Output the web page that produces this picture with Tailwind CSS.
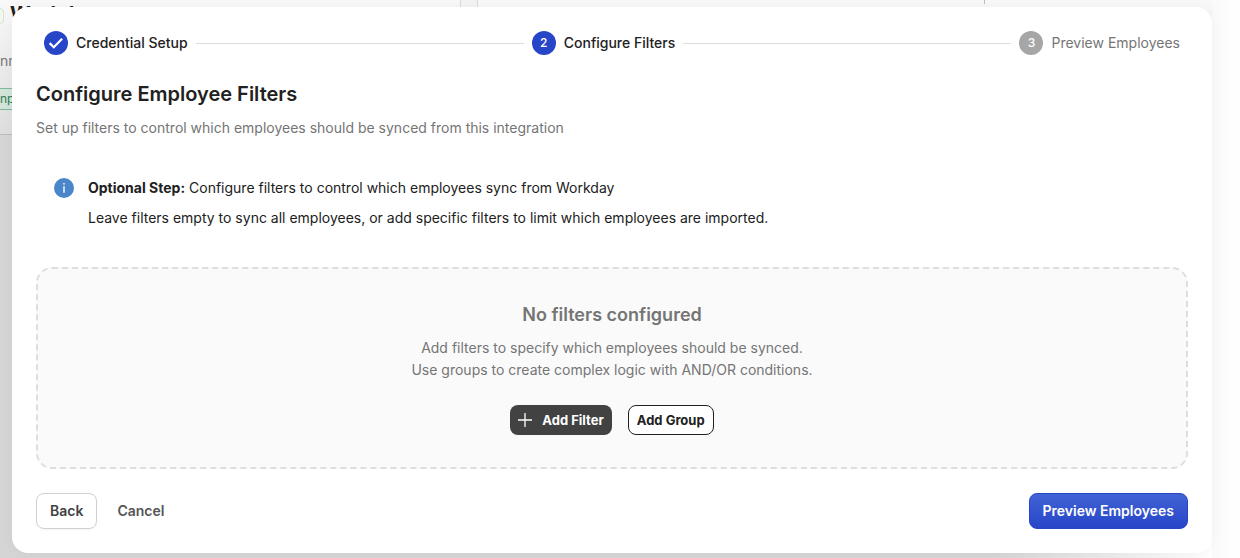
<!DOCTYPE html>
<html lang="en">
<head>
    <meta charset="UTF-8">
    <meta name="viewport" content="width=device-width, initial-scale=1.0">
    <title>Configure Employee Filters</title>
    <script src="https://cdn.jsdelivr.net/npm/@tailwindcss/browser@4"></script>
    <style>
        body {
            font-family: 'Inter', sans-serif;
        }
    </style>
</head>
<body class="relative min-h-screen overflow-hidden bg-linear-to-r from-[#d5d5d5] from-80% to-white to-98% text-sm text-[#212121]">
    <!-- Integrations page behind the dialog -->
    <div class="absolute inset-x-0 top-0 h-[135px] border-b border-[#bdbdbd] bg-linear-to-b from-[#f9f9f9] to-[#dedede]" aria-hidden="true">
        <div class="absolute top-2 -left-3 size-4 rounded border border-[#d3e4cf] bg-[#f3f7f1]"></div>
        <div class="absolute top-0.5 left-2.5 text-xl leading-6 font-bold">Workday</div>
        <div class="absolute top-0 left-[460px] h-2 w-[18px] border-x border-[#dcdcdc] bg-[#f4f4f4]"></div>
        <div class="absolute top-0 left-[984px] h-1 border-l border-[#bdbdbd]"></div>
        <div class="absolute top-[51px] left-0 text-[#757575]">nn</div>
        <div class="absolute top-[88px] left-0 h-[22px] border-y border-[#7fb89a] bg-[#d3e4da] text-xs leading-5 text-[#2e7d52]">np</div>
    </div>
    <div class="absolute inset-y-0 right-0 w-7 bg-linear-to-r from-[#fafafa] to-white"></div>

    <main class="relative mt-[7px] mr-7 ml-3 rounded-2xl bg-white px-6 pt-6 pb-6 shadow-[0_0_16px_rgba(0,0,0,0.04)]">
        <ol class="flex items-center gap-2 px-2">
            <li class="flex items-center gap-2 font-medium">
                <svg class="size-6" viewBox="0 0 24 24" aria-hidden="true">
                    <circle cx="12" cy="12" r="12" fill="#2745c7"/>
                    <path d="M5.6 12.1l4.2 4.1 8.3-8.4" fill="none" stroke="#fff" stroke-width="2.2"/>
                </svg>
                Credential Setup
            </li>
            <li class="h-px flex-1 bg-[#dcdcdc]" aria-hidden="true"></li>
            <li class="flex items-center gap-2 font-medium" aria-current="step">
                <span class="flex size-6 items-center justify-center rounded-full bg-[#2745c7] text-xs text-white">2</span>
                Configure Filters
            </li>
            <li class="h-px flex-1 bg-[#dcdcdc]" aria-hidden="true"></li>
            <li class="flex items-center gap-2 text-[#757575]">
                <span class="flex size-6 items-center justify-center rounded-full bg-[#a6a6a6] text-xs font-medium text-white">3</span>
                Preview Employees
            </li>
        </ol>

        <h1 class="mt-6 text-xl leading-[30px] font-semibold">Configure Employee Filters</h1>
        <p class="mt-[7px] leading-6 text-[#757575]">Set up filters to control which employees should be synced from this integration</p>

        <div class="mt-9 flex gap-3.5 px-[18px]">
            <svg class="mt-0.5 size-5 shrink-0" viewBox="0 0 20 20" aria-hidden="true">
                <circle cx="10" cy="10" r="10" fill="#4a86ca"/>
                <path d="M10 8.2v6.6" stroke="#fff" stroke-width="1.4"/>
                <circle cx="10" cy="5.8" r="0.9" fill="#fff"/>
            </svg>
            <div class="leading-6">
                <p><strong class="font-bold">Optional Step:</strong> Configure filters to control which employees sync from Workday</p>
                <p class="mt-1.5">Leave filters empty to sync all employees, or add specific filters to limit which employees are imported.</p>
            </div>
        </div>

        <section class="mt-[37px] flex flex-col items-center rounded-2xl border-2 border-dashed border-[#dedede] bg-[#fafafa] px-8 py-8 text-center text-[#757575]">
            <h2 class="text-lg leading-7 font-semibold">No filters configured</h2>
            <p class="mt-2 leading-[22px]">Add filters to specify which employees should be synced.<br>Use groups to create complex logic with AND/OR conditions.</p>
            <div class="mt-6 flex gap-4">
                <button type="button" class="flex h-[30px] items-center gap-2.5 rounded-lg bg-[#424242] px-2 text-[13px] font-bold text-white">
                    <svg class="size-3.5" viewBox="0 0 14 14" fill="none" stroke="currentColor" stroke-width="1.3" aria-hidden="true">
                        <path d="M7 0v14M0 7h14"/>
                    </svg>
                    Add Filter
                </button>
                <button type="button" class="h-[30px] rounded-lg border border-[#212121] bg-white px-2 text-[13px] font-bold text-[#212121]">Add Group</button>
            </div>
        </section>

        <div class="mt-6 flex items-center">
            <button type="button" class="h-9 rounded-lg border border-[#d0d0d0] px-[13px] font-semibold text-[#424242] shadow-xs">Back</button>
            <button type="button" class="ml-2 h-9 px-3 font-semibold text-[#555]">Cancel</button>
            <button type="button" class="ml-auto h-9 rounded-lg border border-[#2745c7] bg-linear-to-b from-[#4262d6] to-[#2745c7] px-[13px] font-semibold text-white">Preview Employees</button>
        </div>
    </main>
</body>
</html>
